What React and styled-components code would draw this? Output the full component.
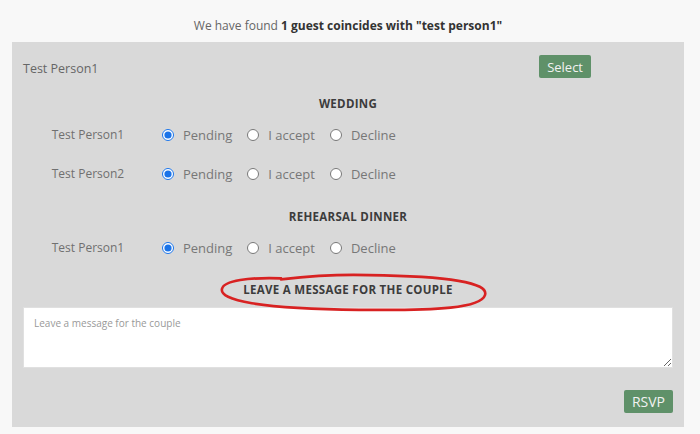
import React, { useState } from "react";
import styled, { createGlobalStyle } from "styled-components";

const GlobalStyle = createGlobalStyle`
  html, body {
    margin: 0;
    padding: 0;
    background: #f8f8f8;
    font-family: "Open Sans", "Liberation Sans", sans-serif;
  }
`;

const events = [
  { title: "Wedding", guests: ["Test Person1", "Test Person2"] },
  { title: "Rehearsal Dinner", guests: ["Test Person1"] },
];

const options = ["Pending", "I accept", "Decline"];

function App() {
  const [answers, setAnswers] = useState({});

  const pick = (key, value) => {
    setAnswers({ ...answers, [key]: value });
  };

  return (
    <Page>
      <GlobalStyle />
      <Found>
        We have found <b>1 guest coincides with "test person1"</b>
      </Found>
      <Panel>
        <Header>
          <GuestName>Test Person1</GuestName>
          <GreenButton>Select</GreenButton>
        </Header>

        {events.map((ev, i) => (
          <Section key={ev.title}>
            <Heading>{ev.title}</Heading>
            {ev.guests.map((g) => {
              const key = i + "-" + g;
              const value = answers[key] || "Pending";
              return (
                <Row key={key}>
                  <RowName>{g}</RowName>
                  <Options>
                    {options.map((o) => (
                      <Option key={o}>
                        <Radio
                          type="radio"
                          name={key}
                          checked={value === o}
                          onChange={() => pick(key, o)}
                        />
                        {o}
                      </Option>
                    ))}
                  </Options>
                </Row>
              );
            })}
          </Section>
        ))}

        <MessageHeading>
          Leave a message for the couple
          <Scribble viewBox="0 0 270 40" preserveAspectRatio="none">
            <path
              d="M62 6 C 30 5, 5 8, 3 16 C 0 27, 40 35, 140 36 C 220 37, 262 34, 266 22 C 270 10, 230 4, 150 3 C 120 2, 90 4, 62 7"
              fill="none"
              stroke="#d82222"
              strokeWidth="2.6"
              strokeLinecap="round"
            />
          </Scribble>
        </MessageHeading>

        <Message placeholder="Leave a message for the couple" />

        <Footer>
          <GreenButton $big>RSVP</GreenButton>
        </Footer>
      </Panel>
    </Page>
  );
}

export default App;

const Page = styled.div`
  padding: 17px 16px 8px 12px;
`;

const Found = styled.div`
  text-align: center;
  font-size: 12px;
  color: #666;
  height: 25px;

  b {
    font-weight: 700;
    color: #333;
  }
`;

const Panel = styled.div`
  background: #d9d9d9;
  padding: 14px 11px 14px 11px;
`;

const Header = styled.div`
  display: flex;
  align-items: center;
  justify-content: space-between;
  padding-right: 82px;
  height: 24px;
`;

const GuestName = styled.div`
  font-size: 12.5px;
  color: #666;
`;

const GreenButton = styled.button`
  background: #5f9169;
  color: #f2f2f2;
  border: none;
  border-radius: 2px;
  font-family: inherit;
  font-size: ${(p) => (p.$big ? "14px" : "13px")};
  padding: 2px 8px;
  height: 23px;
  margin-top: ${(p) => (p.$big ? "0" : "-3px")};
  cursor: pointer;
`;

const Section = styled.div`
  margin-top: 14px;
`;

const Heading = styled.div`
  text-align: center;
  text-transform: uppercase;
  font-weight: 700;
  font-size: 11.5px;
  letter-spacing: 0.3px;
  color: #3c3c3c;
  height: 20px;
  line-height: 20px;
  margin-bottom: 1px;
`;

const Row = styled.div`
  display: grid;
  grid-template-columns: 130px 1fr;
  column-gap: 9px;
  align-items: center;
  height: 39px;
`;

const RowName = styled.div`
  text-align: center;
  font-size: 12px;
  color: #707070;
`;

const Options = styled.div`
  display: flex;
  gap: 15px;
`;

const Option = styled.label`
  display: flex;
  align-items: center;
  font-size: 13px;
  color: #777;
`;

const Radio = styled.input`
  width: 12px;
  height: 12px;
  margin: 0 9px 0 0;
  accent-color: #1a73e8;
`;

const MessageHeading = styled(Heading)`
  position: relative;
  width: 260px;
  margin: 9px auto 0;
  height: 28px;
  line-height: 28px;
`;

const Scribble = styled.svg`
  position: absolute;
  left: 1px;
  top: -4px;
  width: 270px;
  height: 42px;
  pointer-events: none;
`;

const Message = styled.textarea`
  display: block;
  box-sizing: border-box;
  width: 100%;
  height: 61px;
  margin-top: 3px;
  border: 1px solid #e0e0e0;
  background: #fff;
  padding: 8px 10px;
  font-family: inherit;
  font-size: 10px;
  resize: vertical;

  &::placeholder {
    color: #999;
  }
`;

const Footer = styled.div`
  display: flex;
  justify-content: flex-end;
  margin-top: 22px;
`;
